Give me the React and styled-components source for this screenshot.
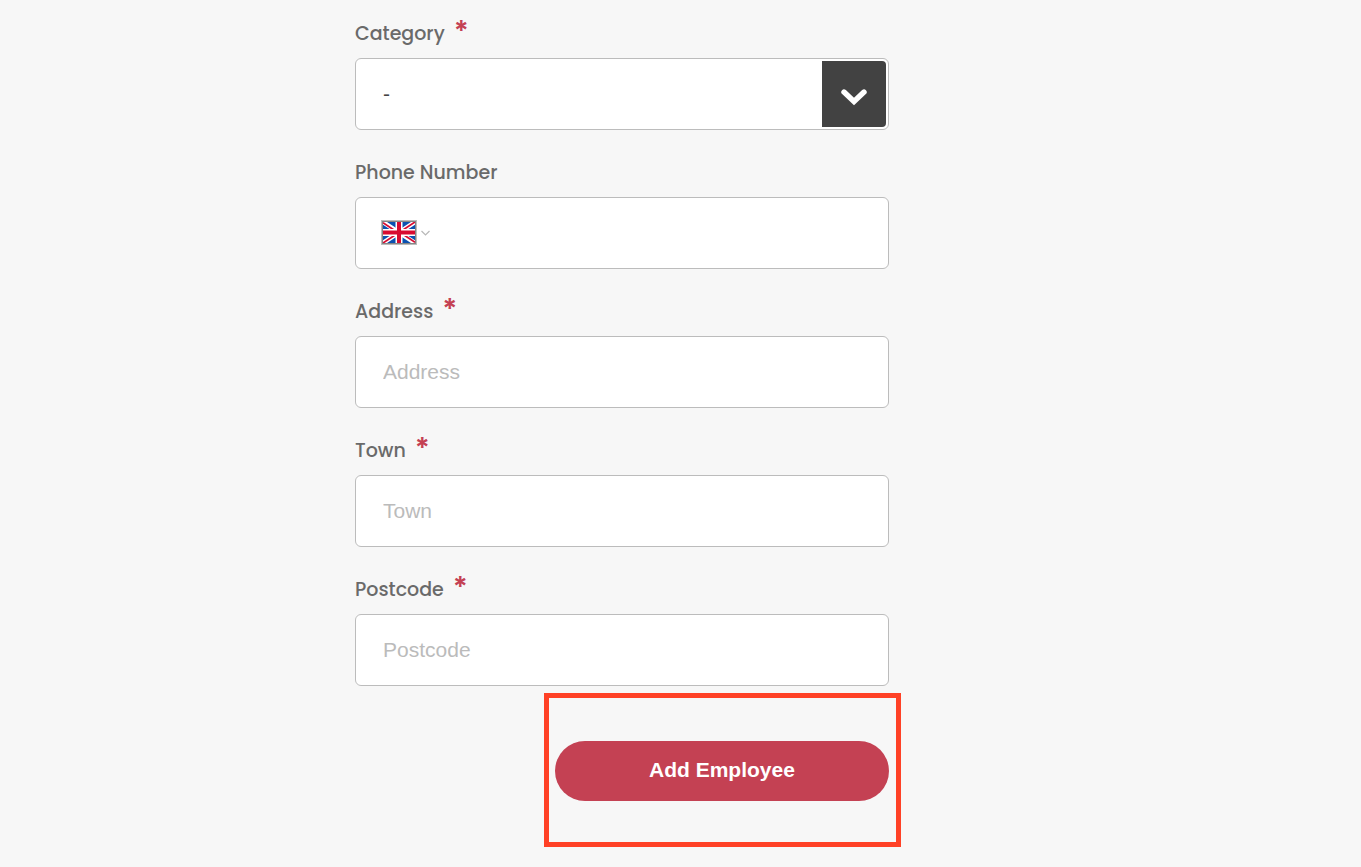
import React, { useState } from "react";
import styled, { createGlobalStyle } from "styled-components";

const TEXT_FIELDS = [
  { name: "address", label: "Address" },
  { name: "town", label: "Town" },
  { name: "postcode", label: "Postcode" },
];

const FieldLabel = ({ htmlFor, required, children }) => (
  <LabelRow>
    <Label htmlFor={htmlFor}>{children}</Label>
    {required && <Required>*</Required>}
  </LabelRow>
);

const UkFlag = () => (
  <svg width="32" height="21" viewBox="0 0 32 21" aria-hidden="true">
    <path fill="#0b51b0" d="M0 0h32v21H0z" />
    <path d="M0 0L32 21M32 0L0 21" stroke="#fff" strokeWidth="4.4" />
    <path
      d="M0 0.8L14 10M32 20.2L18 11M32 0L18 9.2M0 21L14 11.8"
      stroke="#d80a30"
      strokeWidth="1.7"
    />
    <path d="M16 0V21M0 10.5H32" stroke="#fff" strokeWidth="7" />
    <path d="M16 0V21" stroke="#d80a30" strokeWidth="4" />
    <path d="M0 10.5H32" stroke="#d80a30" strokeWidth="4" />
  </svg>
);

const App = () => {
  const [employee, setEmployee] = useState({
    category: "",
    country: "GB",
    phone: "",
    address: "",
    town: "",
    postcode: "",
  });

  const handleChange = (e) => {
    const { name, value } = e.target;
    setEmployee((prev) => ({ ...prev, [name]: value }));
  };

  return (
    <>
      <GlobalStyle />
      <Page>
        <Form onSubmit={(e) => e.preventDefault()}>
          <Field>
            <FieldLabel htmlFor="category" required>Category</FieldLabel>
            <SelectBox>
              <Select id="category" name="category" value={employee.category} onChange={handleChange}>
                <option value="">-</option>
              </Select>
              <SelectArrow>
                <svg width="28" height="18" viewBox="0 0 28 18" aria-hidden="true">
                  <path d="M4 4L14 13.5L24 4" fill="none" stroke="#fff" strokeWidth="5.4" strokeLinecap="round" />
                </svg>
              </SelectArrow>
            </SelectBox>
          </Field>

          <Field>
            <FieldLabel htmlFor="phone">Phone Number</FieldLabel>
            <PhoneBox>
              <Country>
                <FlagFrame>
                  <UkFlag />
                </FlagFrame>
                <svg width="9" height="9" viewBox="0 0 9 9" aria-hidden="true">
                  <path d="M0.5 3L4.5 7L8.5 3" fill="none" stroke="#b8b8b8" strokeWidth="1.2" />
                </svg>
                <CountrySelect
                  name="country"
                  aria-label="Phone number country"
                  value={employee.country}
                  onChange={handleChange}
                >
                  <option value="GB">United Kingdom</option>
                </CountrySelect>
              </Country>
              <PhoneInput id="phone" name="phone" type="tel" value={employee.phone} onChange={handleChange} />
            </PhoneBox>
          </Field>

          {TEXT_FIELDS.map(({ name, label }) => (
            <Field key={name}>
              <FieldLabel htmlFor={name} required>{label}</FieldLabel>
              <Input
                id={name}
                name={name}
                type="text"
                placeholder={label}
                value={employee[name]}
                onChange={handleChange}
              />
            </Field>
          ))}

          <Highlight>
            <SubmitButton type="submit">Add Employee</SubmitButton>
          </Highlight>
        </Form>
      </Page>
    </>
  );
};

export default App;

// --- Styled Components ---
const GlobalStyle = createGlobalStyle`
  *, *::before, *::after { box-sizing: border-box; }
  body { margin: 0; background: #f7f7f7; font-family: "Liberation Sans", Arial, sans-serif; }
`;
const Page = styled.main`
  display: grid;
  grid-template-columns: minmax(16px, 355fr) minmax(300px, 534fr) minmax(16px, 472fr);
  padding: 19px 0 20px;
`;
const Form = styled.form`
  grid-column: 2;
  display: flex; flex-direction: column;
`;
const Field = styled.div`
  display: flex; flex-direction: column;
  & + & { margin-top: 28px; }
`;
const LabelRow = styled.div`
  display: flex; gap: 9px; height: 30px; margin-bottom: 9px;
`;
const Label = styled.label`
  font-family: Poppins, Inter, sans-serif; font-size: 19px; font-weight: 500; line-height: 30px;
  color: #6a6a6a;
`;
const Required = styled.span`
  font-family: Inter, sans-serif; font-size: 27px; font-weight: 700; line-height: 24px;
  color: #c44153;
`;
const Box = styled.div`
  position: relative;
  display: flex; align-items: center;
  height: 72px;
  background: #fff; border: 1px solid #bcbcbc; border-radius: 6px;
`;
const SelectBox = styled(Box)`
  padding: 2px;
`;
const Select = styled.select`
  flex: 1; min-width: 0; height: 100%; padding: 0 72px 2px 25px;
  appearance: none; border: none; outline: none; background: transparent;
  font: 21px "Liberation Sans", Arial, sans-serif; color: #444;
`;
const SelectArrow = styled.span`
  position: absolute; top: 2px; right: 2px; bottom: 2px; width: 64px;
  display: flex; align-items: center; justify-content: center;
  padding-top: 5px;
  background: #424242; border-radius: 0 4px 4px 0; pointer-events: none;
`;
const PhoneBox = styled(Box)`
  padding: 0 0 1px 25px;
`;
const Country = styled.div`
  position: relative;
  display: flex; align-items: center; gap: 4px;
`;
const FlagFrame = styled.span`
  display: flex;
  border: 1px solid #bcbcbc; padding: 1px; background: #858585;
`;
const CountrySelect = styled.select`
  position: absolute; inset: 0; width: 100%; opacity: 0; cursor: pointer;
`;
const PhoneInput = styled.input`
  flex: 1; min-width: 0; height: 100%; padding: 0 12px;
  border: none; outline: none; background: transparent;
  font: 21px "Liberation Sans", Arial, sans-serif; color: #444;
`;
const Input = styled.input`
  width: 100%; height: 72px; padding: 0 27px;
  background: #fff; border: 1px solid #bcbcbc; border-radius: 6px; outline: none;
  font: 21px "Liberation Sans", Arial, sans-serif; color: #444;
  &::placeholder { color: #bbb; opacity: 1; }
`;
const Highlight = styled.div`
  align-self: flex-end;
  width: calc(62% + 26px); margin: 7px -12px 0 0; padding: 43px 7px 41px 6px;
  border: 5px solid #ff4126;
`;
const SubmitButton = styled.button`
  display: block; width: 100%; height: 60px; padding: 0 24px 2px;
  border: none; border-radius: 30px; background: #c44153; cursor: pointer;
  font: bold 21px "Liberation Sans", Arial, sans-serif; color: #fff;
`;
